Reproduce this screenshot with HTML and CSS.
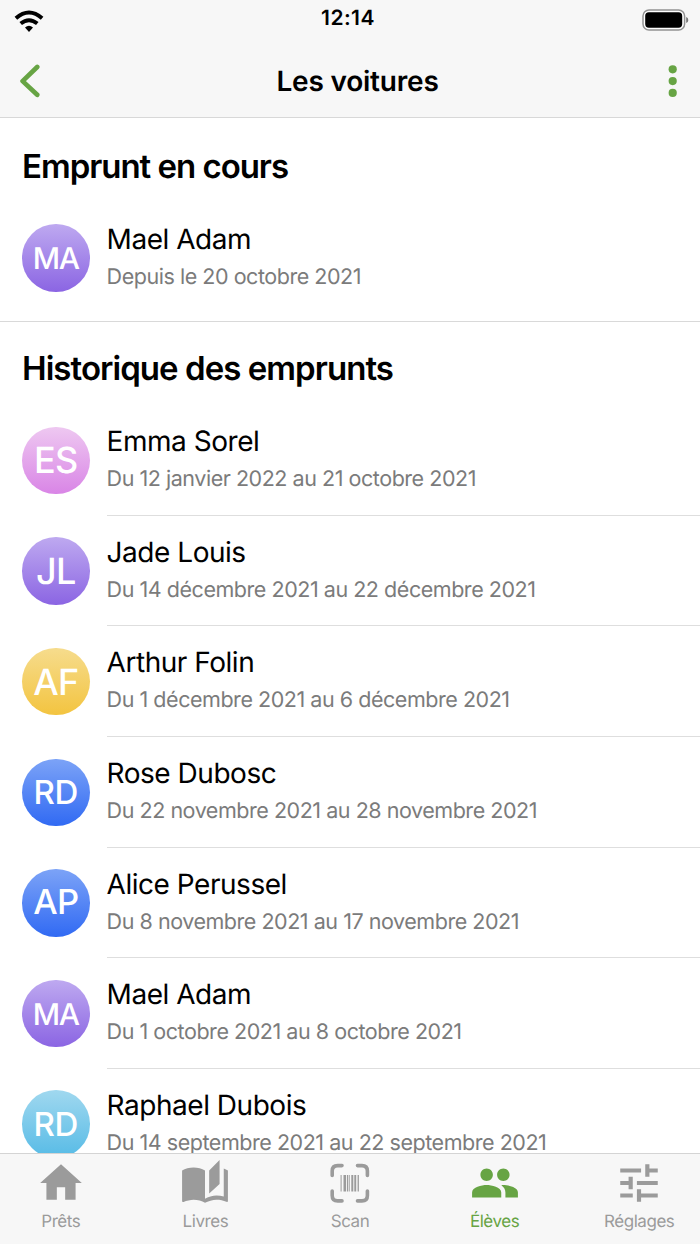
FILE: index.html
```
<!DOCTYPE html>
<html lang="fr">
<head>
<meta charset="utf-8">
<title>Les voitures</title>
<link rel="stylesheet" href="styles.css">
</head>
<body>
<div class="app">
  <header class="topbar">
    <div class="status">
      <svg class="wifi" viewBox="0 0 30 23" width="30" height="23" fill="none" stroke="#000" stroke-width="3.9">
        <path d="M1.9 8.300Q15 -3.300 28.100 8.300"/>
        <path d="M6.700 13.600Q15 6.700 23.300 13.600"/>
        <path d="M15 22L11 17.600Q15 14 19 17.600Z" fill="#000" stroke="none"/>
      </svg>
      <span class="time">12:14</span>
      <svg class="battery" viewBox="0 0 47 22" width="47" height="22">
        <rect x="1" y="1" width="41.6" height="20" rx="6" fill="#fff" stroke="#929292" stroke-width="1.5"/>
        <rect x="3.2" y="3.3" width="37" height="15.4" rx="3.7" fill="#000"/>
        <path d="M44.2 8Q46.3 8.6 46.3 11T44.2 14Z" fill="#777"/>
      </svg>
    </div>
    <div class="nav">
      <svg class="back" viewBox="0 0 20 34" width="20" height="34"><path d="M17.200 3L2.600 17.100L17.200 30.800" fill="none" stroke="#67a444" stroke-width="4.700" stroke-linecap="round" stroke-linejoin="round"/></svg>
      <h1 class="title">Les voitures</h1>
      <svg class="more" viewBox="0 0 10 34" width="10" height="34" fill="#67a444"><circle cx="4.700" cy="5.3" r="4.1"/><circle cx="4.700" cy="17.1" r="4.1"/><circle cx="4.700" cy="28.9" r="4.1"/></svg>
    </div>
  </header>

  <main class="content">
    <section class="section current">
      <h2 class="heading">Emprunt en cours</h2>
      <div class="row">
        <div class="avatar violet small">MA</div>
        <div class="info"><div class="name">Mael Adam</div><div class="dates">Depuis le 20 octobre 2021</div></div>
      </div>
    </section>
    <section class="section history">
      <h2 class="heading">Historique des emprunts</h2>
      <div class="row">
        <div class="avatar pink large">ES</div>
        <div class="info"><div class="name">Emma Sorel</div><div class="dates">Du 12 janvier 2022 au 21 octobre 2021</div></div>
      </div>
      <div class="row">
        <div class="avatar violet large">JL</div>
        <div class="info"><div class="name">Jade Louis</div><div class="dates">Du 14 décembre 2021 au 22 décembre 2021</div></div>
      </div>
      <div class="row">
        <div class="avatar yellow large">AF</div>
        <div class="info"><div class="name">Arthur Folin</div><div class="dates">Du 1 décembre 2021 au 6 décembre 2021</div></div>
      </div>
      <div class="row">
        <div class="avatar blue medium">RD</div>
        <div class="info"><div class="name">Rose Dubosc</div><div class="dates">Du 22 novembre 2021 au 28 novembre 2021</div></div>
      </div>
      <div class="row">
        <div class="avatar blue semi">AP</div>
        <div class="info"><div class="name">Alice Perussel</div><div class="dates">Du 8 novembre 2021 au 17 novembre 2021</div></div>
      </div>
      <div class="row">
        <div class="avatar violet small">MA</div>
        <div class="info"><div class="name">Mael Adam</div><div class="dates">Du 1 octobre 2021 au 8 octobre 2021</div></div>
      </div>
      <div class="row">
        <div class="avatar sky medium">RD</div>
        <div class="info"><div class="name">Raphael Dubois</div><div class="dates">Du 14 septembre 2021 au 22 septembre 2021</div></div>
      </div>
    </section>
  </main>

  <nav class="tabs">
    <div class="tab">
      <svg class="icon" viewBox="0 0 24 24"><path d="M10 20v-6h4v6h5v-8h3L12 3 2 12h3v8z"/></svg>
      <span>Prêts</span>
    </div>
    <div class="tab">
      <svg class="icon" viewBox="0 0 24 24"><path d="M19 1l-5 5v11l5-4.500V1zM1 6v14.650c0 .25.25.5.5.5.1 0 .15-.05.25-.05C3.100 20.450 5.050 20 6.500 20c1.950 0 4.050.4 5.500 1.500V6c-1.450-1.100-3.550-1.500-5.500-1.500S2.450 4.900 1 6zm22 13.500V6c-.6-.45-1.250-.75-2-1v13.500c-1.100-.35-2.300-.5-3.500-.5-1.700 0-4.150.65-5.500 1.500v2c1.350-.85 3.800-1.500 5.500-1.500 1.650 0 3.350.3 4.750 1.050.1.05.15.05.25.05.25 0 .5-.25.5-.5v-1.100z"/></svg>
      <span>Livres</span>
    </div>
    <div class="tab">
      <svg class="icon" viewBox="0 0 50 50">
        <path d="M7.200 17.500V13Q7.200 7.600 12.600 7.600H17M32.500 7.600H37Q42.400 7.600 42.400 13V17.500M42.400 33V37.500Q42.400 42.900 37 42.900H32.500M17 42.900H12.600Q7.200 42.900 7.200 37.500V33" fill="none" stroke="#9b9b9b" stroke-width="3.600" stroke-linecap="round"/>
        <path d="M15.600 17h1v16.500h-1zM18.500 17h2.600v16.500h-2.600zM22 17h1v16.500h-1zM23.700 17h1v16.500h-1zM26.300 17h2v16.500h-2zM29.300 17h1.900v16.500h-1.900zM32.600 17h1.300v16.500h-1.300z"/>
      </svg>
      <span>Scan</span>
    </div>
    <div class="tab active">
      <svg class="icon" viewBox="0 0 24 24"><path d="M16 11c1.660 0 2.990-1.340 2.990-3S17.660 5 16 5c-1.660 0-3 1.340-3 3s1.340 3 3 3zm-8 0c1.660 0 2.990-1.340 2.990-3S9.660 5 8 5C6.340 5 5 6.340 5 8s1.340 3 3 3zm0 2c-2.330 0-7 1.170-7 3.500V19h14v-2.500c0-2.330-4.670-3.500-7-3.500zm8 0c-.29 0-.62.02-.97.05 1.160.84 1.970 1.970 1.970 3.450V19h6v-2.500c0-2.330-4.670-3.500-7-3.500z"/></svg>
      <span>Élèves</span>
    </div>
    <div class="tab">
      <svg class="icon" viewBox="0 0 24 24"><path d="M3 17v2h6v-2H3zM3 5v2h10V5H3zm10 16v-2h8v-2h-8v-2h-2v6h2zM7 9v2H3v2h4v2h2V9H7zm14 4v-2H11v2h10zm-6-4h2V7h4V5h-4V3h-2v6z"/></svg>
      <span>Réglages</span>
    </div>
  </nav>
</div>
</body>
</html>
```
FILE: styles.css
```
* { box-sizing: border-box; }
body {
  margin: 0;
  background: #fff;
  color: #000;
  font-family: Inter, "Liberation Sans", sans-serif;
  text-rendering: geometricPrecision;
}
.app {
  display: flex;
  flex-direction: column;
  width: 700px;
  height: 1244px;
  overflow: hidden;
}
.topbar {
  flex: none;
  height: 118px;
  background: #f7f7f7;
  border-bottom: 1px solid #d8d8d8;
}
.status {
  display: grid;
  grid-template-columns: 1fr auto 1fr;
  height: 46px;
  padding: 0 11px 0 14px;
}
.wifi { margin-top: 10px; }
.time {
  margin-top: 6px;
  padding-right: 7px;
  font-size: 21px;
  line-height: 26px;
  font-weight: 600;
  letter-spacing: 0.45px;
}
.battery { margin-top: 9px; justify-self: end; }
.nav {
  display: grid;
  grid-template-columns: 1fr auto 1fr;
  align-items: center;
  height: 70px;
  padding: 0 22px 0 20px;
}
.back { margin-top: -1px; }
.title {
  margin: 0;
  padding-left: 17px;
  font-size: 28px;
  line-height: 34px;
  font-weight: 600;
  letter-spacing: -0.2px;
}
.more { justify-self: end; }
.content { flex: 1; min-height: 0; overflow: hidden; }
.current {
  height: 204px;
  border-bottom: 1px solid #d9d9d9;
}
.heading {
  height: 84px;
  margin: 0;
  padding: 28px 0 0 22px;
  font-size: 33px;
  line-height: 40px;
  font-weight: 600;
  letter-spacing: -1.03px;
}
.history .heading {
  height: 83px;
  padding-top: 26px;
  letter-spacing: -0.95px;
}
.row {
  display: flex;
  align-items: center;
  height: 110.67px;
  padding-left: 22px;
}
.current .row { height: 111.5px; }
.avatar {
  flex: none;
  display: flex;
  align-items: center;
  justify-content: center;
  width: 67.6px;
  height: 67.6px;
  margin-right: 17px;
  border-radius: 50%;
  color: #fff;
  font-weight: 500;
}
.small { font-size: 30px; letter-spacing: -1.2px; padding-top: 2px; }
.medium { font-size: 33px; letter-spacing: -0.4px; }
.semi { font-size: 34.5px; letter-spacing: -0.8px; }
.large { font-size: 36px; letter-spacing: -0.8px; }
.violet { background: linear-gradient(#bea9f0, #8b65e3); }
.pink { background: linear-gradient(#eec8f1, #d985e6); }
.yellow { background: linear-gradient(#f6dc8d, #f3c440); }
.blue { background: linear-gradient(#7ca3f7, #316af3); }
.sky { background: linear-gradient(#a0d8ef, #57bbe6); }
.info {
  flex: 1;
  align-self: stretch;
  padding-top: 18px;
  border-bottom: 1px solid #dedede;
}
.current .info { padding-top: 18.6px; border-bottom: 0; }
.name {
  font-size: 28px;
  line-height: 36px;
  letter-spacing: -0.47px;
}
.dates {
  margin-top: 4px;
  color: #7b7b7b;
  font-size: 21.5px;
  line-height: 32px;
  letter-spacing: -0.46px;
}
.tabs {
  flex: none;
  display: flex;
  justify-content: center;
  gap: 24.6px;
  height: 91px;
  padding-top: 4px;
  background: #f7f7f7;
  border-top: 1px solid #d4d4d4;
}
.tab {
  display: flex;
  flex-direction: column;
  align-items: center;
  width: 120px;
  color: #9b9b9b;
  font-size: 17px;
  line-height: 22px;
  letter-spacing: -0.45px;
}
.active { color: #67a444; }
.icon {
  width: 50px;
  height: 50px;
  margin-bottom: 3px;
  fill: currentColor;
}
```
